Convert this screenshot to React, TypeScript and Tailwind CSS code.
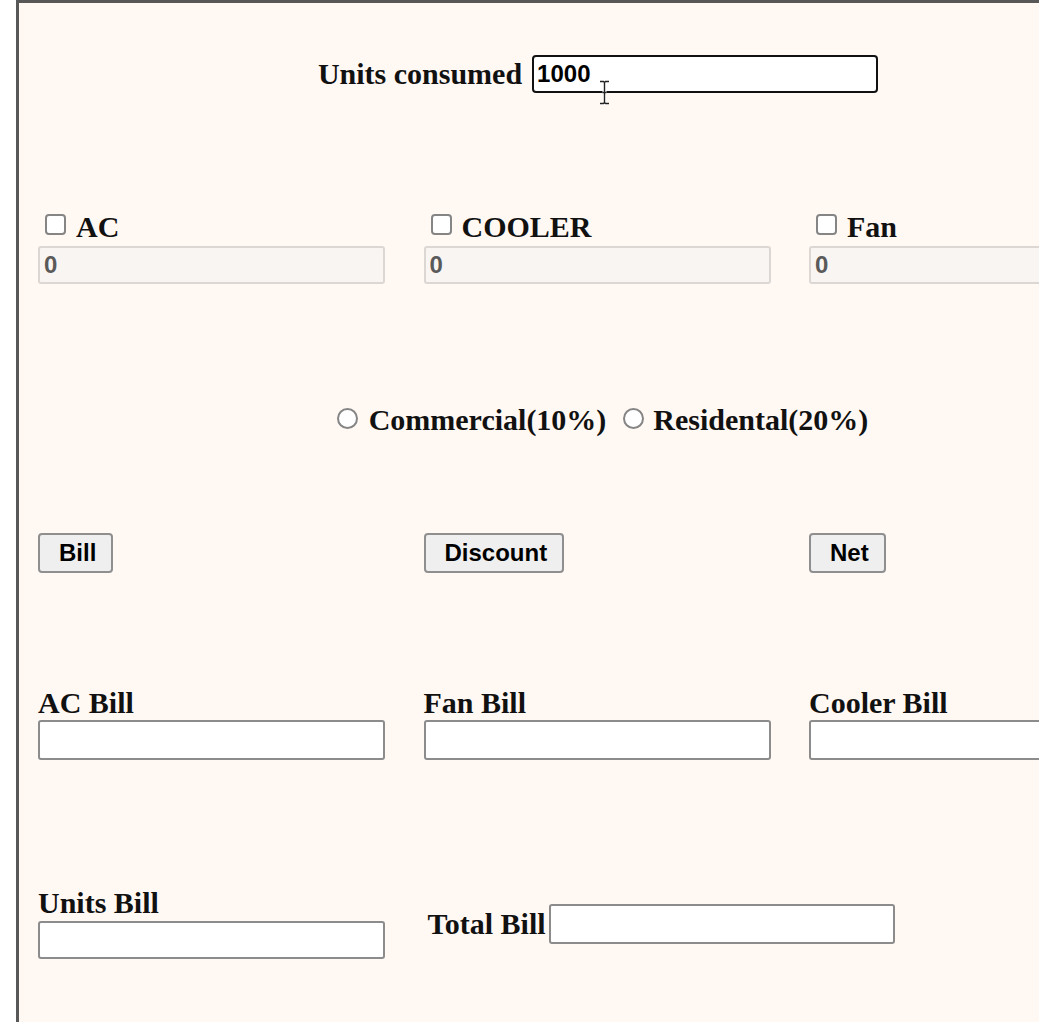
import React from 'react';

const LABEL = "font-['Liberation_Serif',serif] font-bold text-[30px] leading-[30px] text-[#111] whitespace-nowrap";
const FIELD = "font-['Liberation_Sans',sans-serif] font-bold text-[24px] outline-none shrink-0";
const COLS = 'grid grid-cols-[347px_347px_347px] gap-x-[38.5px] pl-[19px]';

const Box: React.FC<{ round?: boolean }> = ({ round }) => (
  <span
    className={
      round
        ? 'inline-block w-[21px] h-[21px] rounded-full border-2 border-[#858585] bg-white shrink-0'
        : 'inline-block w-[21px] h-[21px] rounded-[4px] border-2 border-[#858585] bg-white shrink-0'
    }
  />
);

const Appliance: React.FC<{ name: string }> = ({ name }) => (
  <div className="flex flex-col">
    <label className="flex items-start h-[30px]">
      <span className="ml-[7px] mr-[10px] mt-[2px] flex">
        <Box />
      </span>
      <span className={LABEL}>{name}</span>
    </label>
    <input
      disabled
      value="0"
      readOnly
      className={`${FIELD} mt-[4px] h-[38px] w-[347px] border-2 border-[#dcd7d3] rounded-[3px] bg-[#f9f5f2] text-[#5a5a5a] px-[4px]`}
    />
  </div>
);

const BillField: React.FC<{ label: string }> = ({ label }) => (
  <div className="flex flex-col">
    <span className={LABEL}>{label}</span>
    <input
      readOnly
      className={`${FIELD} mt-[2px] h-[40px] w-[347px] border-2 border-[#8c8c8c] rounded-[3px] bg-white px-[4px]`}
    />
  </div>
);

const ActionButton: React.FC<{ text: string }> = ({ text }) => (
  <div>
    <button className="font-['Liberation_Sans',sans-serif] font-bold text-[24px] leading-none h-[40px] pl-[19px] pr-[15px] bg-[#efefef] border-2 border-[#8f8f8f] rounded-[4px] text-black">
      {text}
    </button>
  </div>
);

export default function App() {
  return (
    <div className="w-full h-[1022px] overflow-hidden bg-white flex pl-[16px]">
      <div className="shrink-0 w-[1161px] h-[1100px] border-l-[3px] border-t-[3px] border-[#585858] bg-[#fff8f3] flex flex-col">
        {/* units */}
        <div className="mt-[52px] flex justify-center items-center h-[38px]">
          <span className={LABEL}>Units consumed</span>
          <div className="relative ml-[10px]">
            <input
              readOnly
              value="1000"
              className={`${FIELD} h-[38px] w-[346px] border-2 border-[#111] rounded-[4px] bg-white pl-[3px] text-black`}
            />
            <svg className="absolute left-[66px] top-[25px]" width="13" height="25" viewBox="0 0 13 25">
              <path d="M2 1.5h3.5l1 1 1-1H11M6.5 2.5v20M2 23.5h3.5l1-1 1 1H11M4.5 12.5h4" stroke="#fff" strokeWidth="3" fill="none" />
              <path d="M2 1.5h3.5l1 1 1-1H11M6.5 2.5v20M2 23.5h3.5l1-1 1 1H11M4.5 12.5h4" stroke="#222" strokeWidth="1.4" fill="none" />
            </svg>
          </div>
        </div>

        {/* appliances */}
        <div className={`${COLS} mt-[119px]`}>
          <Appliance name="AC" />
          <Appliance name="COOLER" />
          <Appliance name="Fan" />
        </div>

        {/* tariff */}
        <div className="mt-[121px] flex justify-center h-[30px]">
          <span className="ml-[9px] mr-[11px] mt-[3px] flex">
            <Box round />
          </span>
          <span className={LABEL}>Commercial(10%)</span>
          <span className="ml-[17px] mr-[9px] mt-[3px] flex">
            <Box round />
          </span>
          <span className={LABEL}>Residental(20%)</span>
        </div>

        {/* actions */}
        <div className={`${COLS} mt-[98px]`}>
          <ActionButton text="Bill" />
          <ActionButton text="Discount" />
          <ActionButton text="Net" />
        </div>

        {/* bills */}
        <div className={`${COLS} mt-[115px]`}>
          <BillField label="AC Bill" />
          <BillField label="Fan Bill" />
          <BillField label="Cooler Bill" />
        </div>

        <div className={`${COLS} mt-[128px] items-center`}>
          <div className="flex flex-col">
            <span className={LABEL}>Units Bill</span>
            <input
              readOnly
              className={`${FIELD} mt-[3px] h-[38px] w-[347px] border-2 border-[#8c8c8c] rounded-[3px] bg-white px-[4px]`}
            />
          </div>
          <div className="flex items-center">
            <span className={`${LABEL} ml-[4px] shrink-0`}>Total Bill</span>
            <input
              readOnly
              className={`${FIELD} ml-[3px] h-[40px] w-[346px] border-2 border-[#8c8c8c] rounded-[3px] bg-white px-[4px]`}
            />
          </div>
        </div>
      </div>
    </div>
  );
}
